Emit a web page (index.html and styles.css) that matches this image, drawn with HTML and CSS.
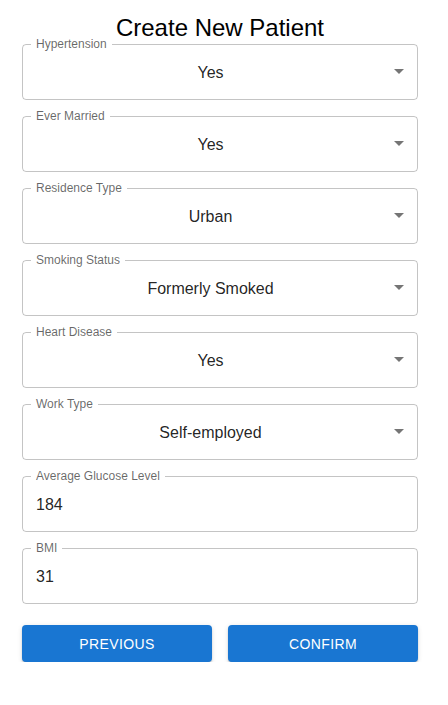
FILE: index.html
```html
<!DOCTYPE html>
<html>
<head>
<meta charset="utf-8">
<link rel="stylesheet" href="styles.css">
</head>
<body>
<div class="page">
  <h1 class="title">Create New Patient</h1>
  <div class="fields">
    <div class="field select">
      <span class="label">Hypertension</span>
      <span class="value">Yes</span>
      <svg class="arrow" viewBox="0 0 24 24" width="24" height="24"><path d="M7 10l5 5 5-5z"/></svg>
    </div>
    <div class="field select">
      <span class="label">Ever Married</span>
      <span class="value">Yes</span>
      <svg class="arrow" viewBox="0 0 24 24" width="24" height="24"><path d="M7 10l5 5 5-5z"/></svg>
    </div>
    <div class="field select">
      <span class="label">Residence Type</span>
      <span class="value">Urban</span>
      <svg class="arrow" viewBox="0 0 24 24" width="24" height="24"><path d="M7 10l5 5 5-5z"/></svg>
    </div>
    <div class="field select">
      <span class="label">Smoking Status</span>
      <span class="value">Formerly Smoked</span>
      <svg class="arrow" viewBox="0 0 24 24" width="24" height="24"><path d="M7 10l5 5 5-5z"/></svg>
    </div>
    <div class="field select">
      <span class="label">Heart Disease</span>
      <span class="value">Yes</span>
      <svg class="arrow" viewBox="0 0 24 24" width="24" height="24"><path d="M7 10l5 5 5-5z"/></svg>
    </div>
    <div class="field select">
      <span class="label">Work Type</span>
      <span class="value">Self-employed</span>
      <svg class="arrow" viewBox="0 0 24 24" width="24" height="24"><path d="M7 10l5 5 5-5z"/></svg>
    </div>
    <div class="field input">
      <span class="label">Average Glucose Level</span>
      <span class="value">184</span>
    </div>
    <div class="field input">
      <span class="label">BMI</span>
      <span class="value">31</span>
    </div>
  </div>
  <div class="actions">
    <button class="btn">Previous</button>
    <button class="btn">Confirm</button>
  </div>
</div>
</body>
</html>
```
FILE: styles.css
```css
html, body {
  margin: 0;
  padding: 0;
  background: #fff;
}
body {
  font-family: "Liberation Sans", Arial, sans-serif;
  color: rgba(0, 0, 0, 0.87);
}
.page {
  padding: 14px 30px 0 22px;
}
.title {
  margin: 0;
  font-size: 24px;
  line-height: 28px;
  font-weight: normal;
  text-align: center;
  color: #000;
}
.fields {
  margin-top: 2px;
  display: flex;
  flex-direction: column;
  gap: 16px;
}
.field {
  position: relative;
  box-sizing: border-box;
  height: 56px;
  border: 1px solid rgba(0, 0, 0, 0.23);
  border-radius: 4px;
  display: flex;
  align-items: center;
}
.label {
  position: absolute;
  top: -8px;
  left: 8px;
  padding: 0 5px;
  background: #fff;
  font-size: 12px;
  line-height: 14px;
  color: rgba(0, 0, 0, 0.6);
}
.value {
  flex: 1;
  font-size: 16px;
  line-height: 19px;
}
.select .value {
  text-align: center;
  padding: 0 32px 0 13px;
}
.input .value {
  padding: 0 13px;
}
.arrow {
  position: absolute;
  right: 6px;
  top: calc(50% - 13px);
  fill: rgba(0, 0, 0, 0.54);
}
.actions {
  margin-top: 21px;
  display: grid;
  grid-template-columns: 1fr 1fr;
  gap: 16px;
}
.btn {
  height: 37px;
  border: none;
  border-radius: 4px;
  background: #1976d2;
  color: #fff;
  font-family: "Liberation Sans", Arial, sans-serif;
  font-size: 14px;
  letter-spacing: 0.4px;
  text-transform: uppercase;
  box-shadow: 0 3px 1px -2px rgba(0,0,0,0.2), 0 2px 2px 0 rgba(0,0,0,0.14), 0 1px 5px 0 rgba(0,0,0,0.12);
  padding: 0;
}
```
